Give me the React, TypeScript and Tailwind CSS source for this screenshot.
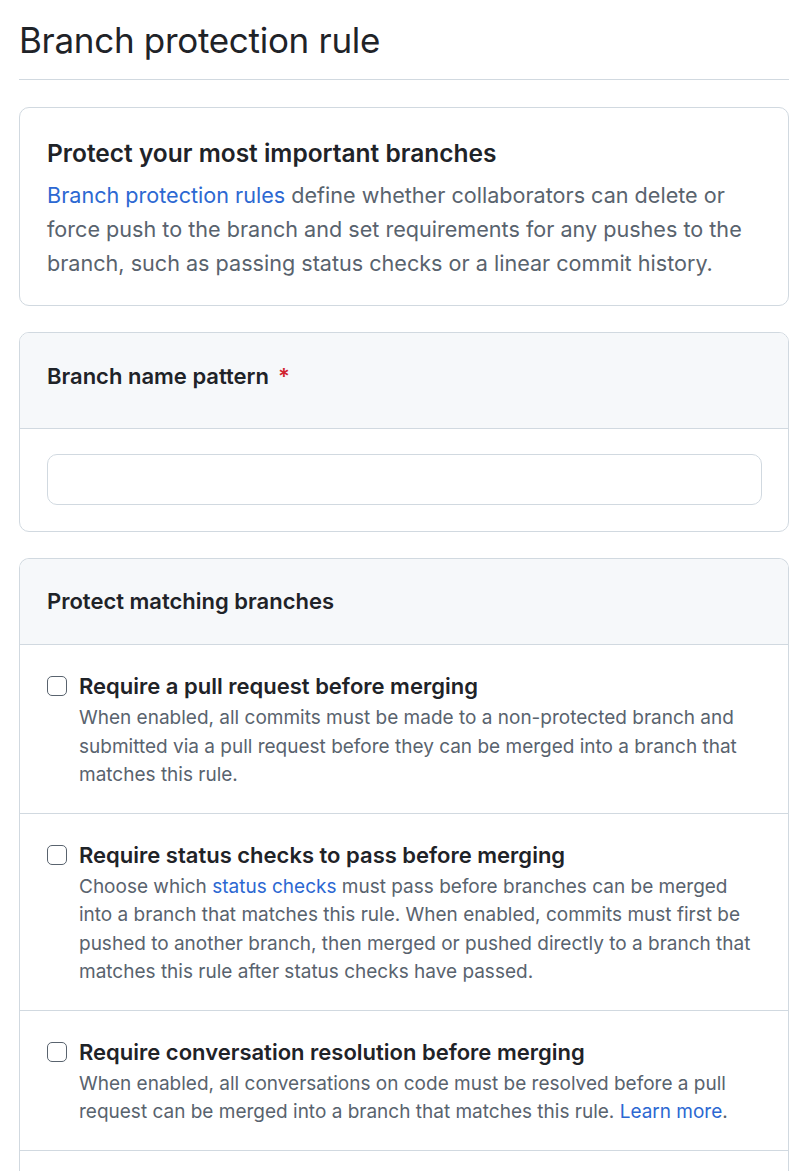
const rules = [
  {
    title: "Require a pull request before merging",
    body: (
      <>
        When enabled, all commits must be made to a non-protected branch and submitted via a pull request before they can be
        merged into a branch that matches this rule.
      </>
    ),
  },
  {
    title: "Require status checks to pass before merging",
    body: (
      <>
        Choose which <a className="text-[#2c68d2]">status checks</a> must pass before branches can be merged into a branch
        that matches this rule. When enabled, commits must first be pushed to another branch, then merged or pushed directly
        to a branch that matches this rule after status checks have passed.
      </>
    ),
  },
  {
    title: "Require conversation resolution before merging",
    body: (
      <>
        When enabled, all conversations on code must be resolved before a pull request can be merged into a branch that
        matches this rule. <a className="text-[#2c68d2]">Learn more</a>.
      </>
    ),
  },
];

export default function App() {
  return (
    <div className="min-h-[1171px] bg-white px-[19px] pt-[18px] text-[#1f2328] font-['Inter','Noto_Sans',sans-serif]">
      {/* Page title */}
      <h1 className="pb-[17px] text-[35px] leading-[44px] font-normal tracking-[-0.3px] border-b border-[#d1d9e0] w-[770px]">
        Branch protection rule
      </h1>

      {/* Intro card */}
      <div className="mt-[27px] w-[770px] rounded-[10px] border border-[#d1d9e0] px-[27px] pt-[29px] pb-[25px]">
        <h2 className="text-[24.5px] leading-[32px] font-semibold">Protect your most important branches</h2>
        <p className="mt-[9px] text-[21.6px] leading-[34px] text-[#59636e]">
          <a className="text-[#2c68d2]">Branch protection rules</a> define whether collaborators can delete or force push to
          the branch and set requirements for any pushes to the branch, such as passing status checks or a linear commit
          history.
        </p>
      </div>

      {/* Branch name pattern */}
      <div className="mt-[26px] w-[770px] rounded-[10px] border border-[#d1d9e0] overflow-hidden">
        <div className="h-[96px] flex items-start pt-[28px] px-[27px] bg-[#f6f8fa] border-b border-[#d1d9e0]">
          <span className="text-[22px] leading-[30px] font-semibold">Branch name pattern</span>
          <span className="ml-[9px] text-[22px] leading-[30px] font-semibold text-[#d1242f]">*</span>
        </div>
        <div className="px-[27px] pt-[25px] pb-[26px]">
          <input className="block w-[715px] h-[51px] rounded-[10px] border border-[#d1d9e0] outline-none px-3" />
        </div>
      </div>

      {/* Protect matching branches */}
      <div className="mt-[26px] w-[770px] rounded-t-[10px] border border-b-0 border-[#d1d9e0] overflow-hidden">
        <div className="h-[86px] flex items-center px-[27px] bg-[#f6f8fa] border-b border-[#d1d9e0]">
          <span className="text-[22px] font-semibold">Protect matching branches</span>
        </div>
        {rules.map((r) => (
          <div key={r.title} className="flex gap-[12px] px-[27px] pt-[26px] pb-[23px] border-b border-[#d1d9e0]">
            <span className="mt-[5px] w-[20px] h-[20px] shrink-0 rounded-[5px] border-[1.5px] border-[#59636e] bg-white" />
            <div>
              <div className="text-[22px] leading-[30px] font-semibold">{r.title}</div>
              <p className="mt-[3px] text-[19px] leading-[28.5px] text-[#59636e]">{r.body}</p>
            </div>
          </div>
        ))}
        <div className="h-[40px]" />
      </div>
    </div>
  );
}
